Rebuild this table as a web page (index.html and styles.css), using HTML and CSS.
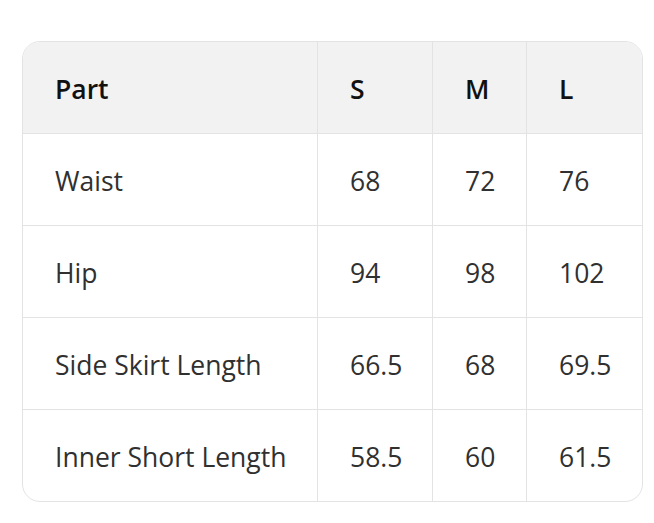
FILE: index.html
```html
<!DOCTYPE html>
<html>
<head>
<meta charset="utf-8">
<link rel="stylesheet" href="styles.css">
</head>
<body>
<div class="wrap">
  <table class="size-table">
    <colgroup>
      <col class="c1"><col class="c2"><col class="c3"><col class="c4">
    </colgroup>
    <thead>
      <tr><th>Part</th><th>S</th><th>M</th><th>L</th></tr>
    </thead>
    <tbody>
      <tr><td>Waist</td><td>68</td><td>72</td><td>76</td></tr>
      <tr><td>Hip</td><td>94</td><td>98</td><td>102</td></tr>
      <tr><td>Side Skirt Length</td><td>66.5</td><td>68</td><td>69.5</td></tr>
      <tr><td>Inner Short Length</td><td>58.5</td><td>60</td><td>61.5</td></tr>
    </tbody>
  </table>
</div>
</body>
</html>
```

FILE: styles.css
```css
html, body {
  margin: 0;
  padding: 0;
  background: #ffffff;
}
body {
  padding: 41px 0 0 22px;
  font-family: "Open Sans", "Noto Sans", sans-serif;
}
.wrap {
  width: 619px;
  border: 1px solid #e3e3e3;
  border-radius: 18px;
  overflow: hidden;
}
.size-table {
  width: 619px;
  border-collapse: separate;
  border-spacing: 0;
  table-layout: fixed;
}
.c1 { width: 295px; }
.c2 { width: 115px; }
.c3 { width: 94px; }
.c4 { width: 115px; }
th, td {
  height: 89px;
  padding: 2px 0 0 32px;
  text-align: left;
  vertical-align: middle;
  border-right: 1px solid #e3e3e3;
  border-bottom: 1px solid #e3e3e3;
  font-size: 26.5px;
  color: #303030;
  font-weight: 400;
  box-sizing: content-box;
}
th {
  background: #f2f2f2;
  font-weight: 600;
  color: #111111;
}
th:last-child, td:last-child { border-right: none; }
tbody tr:last-child td { border-bottom: none; }
```
